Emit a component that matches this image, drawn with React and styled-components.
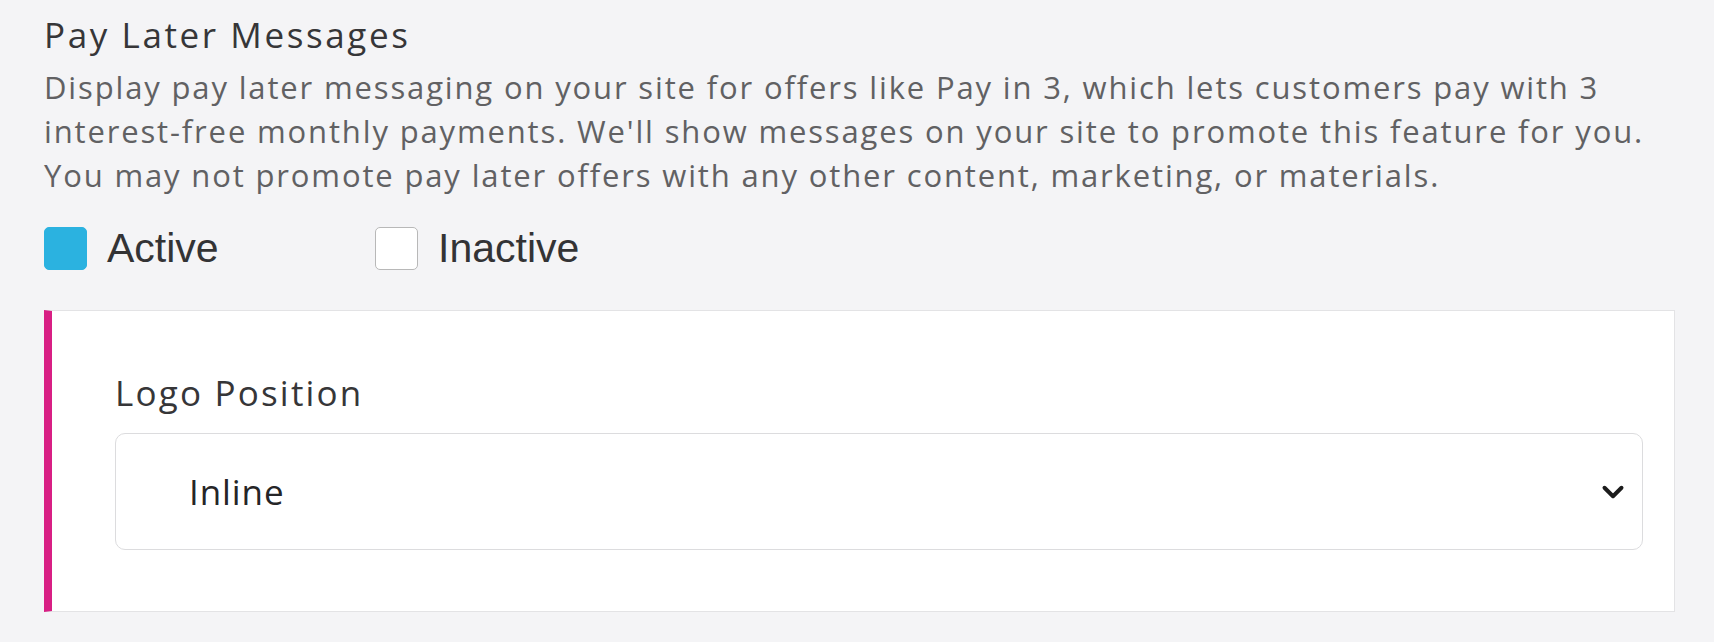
import React, { useState } from 'react';
import styled, { createGlobalStyle } from 'styled-components';
import { ChevronDown } from 'lucide-react';

const GlobalStyle = createGlobalStyle`
  html, body {
    margin: 0;
    padding: 0;
    background: #f4f4f6;
  }
`;

function App() {
  const [active, setActive] = useState(true);

  return (
    <>
      <GlobalStyle />
      <Page>
        <Title>Pay Later Messages</Title>
        <Description>
          Display pay later messaging on your site for offers like Pay in 3, which lets customers pay with 3
          <br />
          interest-free monthly payments. We'll show messages on your site to promote this feature for you.
          <br />
          You may not promote pay later offers with any other content, marketing, or materials.
        </Description>
        <Options>
          <Option onClick={() => setActive(true)}>
            <Box $checked={active} />
            <OptionLabel>Active</OptionLabel>
          </Option>
          <Option onClick={() => setActive(false)}>
            <Box $checked={!active} />
            <OptionLabel>Inactive</OptionLabel>
          </Option>
        </Options>
        <Card>
          <FieldLabel>Logo Position</FieldLabel>
          <Select>
            <SelectValue>Inline</SelectValue>
            <ChevronDown size={34} strokeWidth={2.8} color="#1c1c1c" />
          </Select>
        </Card>
      </Page>
    </>
  );
}

const Page = styled.div`
  padding: 15px 39px 30px 44px;
  font-family: "Open Sans", Lato, sans-serif;
`;

const Title = styled.h2`
  margin: 0;
  font-size: 35px;
  line-height: 40px;
  font-weight: 500;
  letter-spacing: 2.6px;
  color: #363638;
`;

const Description = styled.p`
  margin: 10px 0 0;
  font-size: 31px;
  line-height: 44px;
  letter-spacing: 1.85px;
  color: #616163;
  white-space: nowrap;
`;

const Options = styled.div`
  display: flex;
  align-items: center;
  margin-top: 29px;
`;

const Option = styled.label`
  display: flex;
  align-items: center;
  gap: 20px;
  width: 331px;
  cursor: pointer;
`;

const Box = styled.span`
  width: 43px;
  height: 43px;
  box-sizing: border-box;
  border-radius: 5px;
  background: ${(p) => (p.$checked ? '#2bb2e0' : '#ffffff')};
  border: 1px solid ${(p) => (p.$checked ? '#2bb2e0' : '#b8b8b8')};
`;

const OptionLabel = styled.span`
  font-family: "Liberation Sans", Arial, sans-serif;
  font-size: 41px;
  line-height: 44px;
  color: #333335;
`;

const Card = styled.div`
  margin-top: 40px;
  background: #ffffff;
  border: 1px solid #e3e3e5;
  border-left: 8px solid #d81f84;
  padding: 62px 31px 61px 63px;
`;

const FieldLabel = styled.div`
  font-size: 35px;
  line-height: 40px;
  font-weight: 500;
  letter-spacing: 2.2px;
  color: #363638;
`;

const Select = styled.div`
  margin-top: 20px;
  height: 117px;
  box-sizing: border-box;
  border: 1px solid #dcdcde;
  border-radius: 10px;
  display: flex;
  align-items: center;
  justify-content: space-between;
  padding: 0 12px 0 73px;
`;

const SelectValue = styled.span`
  font-size: 35px;
  letter-spacing: 0.9px;
  color: #252527;
`;

export default App;
